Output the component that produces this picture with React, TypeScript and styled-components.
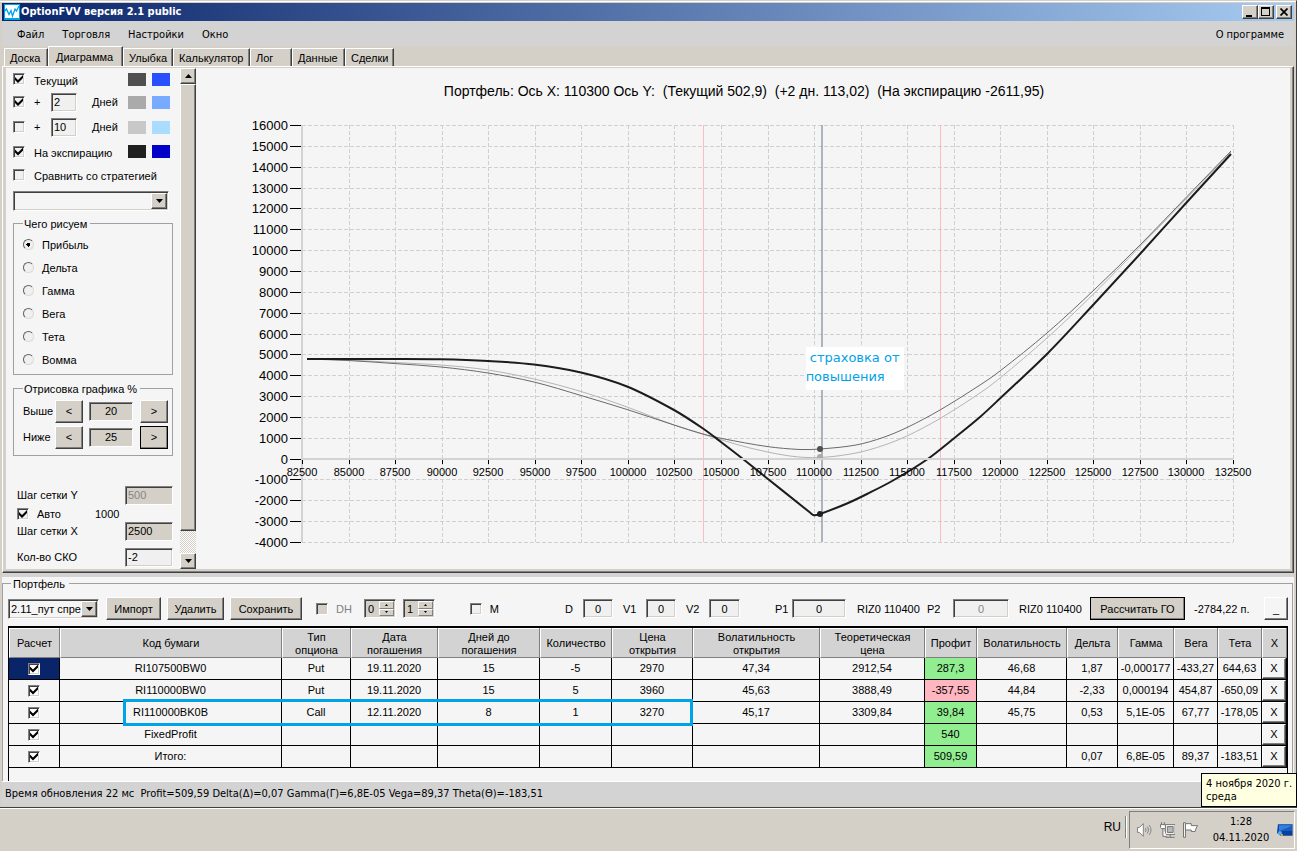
import React from 'react';
import styled, { createGlobalStyle, css } from 'styled-components';

const face = '#d4d0c8';
const panel = '#f5f5f5';
const bar = '#d3d3d3';
const controlFont = '"Liberation Sans", Arial, sans-serif';
const menuFont = '"DejaVu Sans Condensed", "DejaVu Sans", Tahoma, sans-serif';

const raised = css`
  border: 1px solid;
  border-color: #ffffff #404040 #404040 #ffffff;
  box-shadow: inset -1px -1px 0 #808080;
`;

const sunken = css`
  border: 1px solid;
  border-color: #808080 #ffffff #ffffff #808080;
  box-shadow: inset 1px 1px 0 #404040, inset -1px -1px 0 ${face};
`;

const GlobalStyle = createGlobalStyle`
  *, *::before, *::after { box-sizing: border-box; }
  body {
    margin: 0;
    background: ${face};
    color: #000000;
    font-family: ${controlFont};
    font-size: 11px;
    line-height: 14px;
  }
  button, input, select { font: inherit; color: inherit; margin: 0; border-radius: 0; }
`;

const Desktop = styled.div`
  display: flex;
  flex-direction: column;
  min-height: 100vh;
`;

const Window = styled.main`
  position: relative;
  flex: 1;
  display: flex;
  flex-direction: column;
  padding: 1px 2px 2px;
  border-top: 1px solid ${face};
  border-right: 1px solid #404040;
  border-bottom: 1px solid #404040;
  box-shadow: inset 0 1px 0 #ffffff;
`;

const TitleBar = styled.header`
  display: flex;
  align-items: center;
  height: 18px;
  margin-top: 1px;
  padding: 0 2px;
  background: linear-gradient(to right, #0a246a, #a6caf0);
  color: #ffffff;
`;

const Title = styled.h1`
  flex: 1;
  margin: 0 0 0 1px;
  font: bold 11px/16px ${menuFont};
`;

const CaptionButton = styled.button<{ $apart?: boolean }>`
  ${raised}
  display: flex;
  align-items: center;
  justify-content: center;
  width: 16px;
  height: 14px;
  padding: 0;
  margin-left: ${(p) => (p.$apart ? 2 : 0)}px;
  background: ${face};
  color: #000000;
`;

const MenuBar = styled.nav`
  display: flex;
  gap: 18px;
  align-items: center;
  height: 25px;
  padding: 2px 10px 0 15px;
  background: ${bar};
`;

const MenuItem = styled.button<{ $last?: boolean }>`
  padding: 0;
  border: 0;
  background: none;
  font-family: ${menuFont};
  margin-left: ${(p) => (p.$last ? 'auto' : 0)};
`;

const Tabs = styled.div`
  display: flex;
  align-items: flex-end;
  height: 20px;
  padding-left: 2px;
`;

const Tab = styled.button<{ $w: number; $active?: boolean }>`
  width: ${(p) => p.$w}px;
  height: ${(p) => (p.$active ? 20 : 18)}px;
  padding: 0 0 0 ${(p) => (p.$active ? 7 : 5)}px;
  border: 1px solid;
  border-color: #ffffff #404040 transparent #ffffff;
  border-bottom: 0;
  box-shadow: inset -1px 0 0 #808080;
  background: ${face};
  text-align: left;
  white-space: nowrap;
`;

const TabPage = styled.section`
  display: flex;
  border: 1px solid;
  border-color: #ffffff #404040 #404040 #ffffff;
  padding: 1px 3px 3px;
  box-shadow: inset -1px -1px 0 #808080, inset -3px -3px 0 ${face}, inset 1px 1px 0 ${face};
  background: linear-gradient(to right, ${face} 3px, ${panel} 3px);
`;

const Sidebar = styled.aside`
  flex: none;
  width: 174px;
  padding: 0 11px 0 7px;
`;

const SeriesRow = styled.div<{ $h: number }>`
  display: grid;
  grid-template-columns: 21px 17px 41px 36px 24px 18px;
  align-items: center;
  height: ${(p) => p.$h}px;
`;

const WideLabel = styled.label`
  grid-column: 2 / 5;
  padding-top: 3px;
  white-space: nowrap;
`;

const Swatch = styled.span<{ $color: string }>`
  width: 18px;
  height: 13px;
  background: ${(p) => p.$color};
`;

const Check = styled.input.attrs({ type: 'checkbox' })<{ $face?: boolean }>`
  ${sunken}
  appearance: none;
  position: relative;
  display: block;
  flex: none;
  width: 12px;
  height: 12px;
  background: ${(p) => (p.$face ? face : '#f0f0f0')};
  &:checked::after {
    content: '';
    position: absolute;
    left: 1px;
    top: 1px;
    width: 8px;
    height: 8px;
    background: #000000;
    clip-path: polygon(0 2px, 3px 5px, 8px 0, 8px 3px, 3px 8px, 0 5px);
  }
`;

const Radio = styled.input.attrs({ type: 'radio' })`
  appearance: none;
  width: 11px;
  height: 11px;
  border: 1px solid;
  border-color: #606060 #dddad4 #dddad4 #606060;
  border-radius: 50%;
  background: #f0f0f0;
  &:checked {
    background: radial-gradient(circle, #000000 0 2px, #f0f0f0 2px);
  }
`;

const TextBox = styled.input<{ $w: number; $tone?: string; $center?: boolean }>`
  ${sunken}
  width: ${(p) => p.$w}px;
  height: 19px;
  padding: 0 2px;
  background: ${(p) => p.$tone ?? '#f0f0f0'};
  text-align: ${(p) => (p.$center ? 'center' : 'left')};
  &:disabled { color: #868686; }
`;

const Combo = styled.div<{ $gapTop?: number }>`
  ${sunken}
  position: relative;
  display: flex;
  height: 20px;
  margin-top: ${(p) => p.$gapTop ?? 0}px;
  padding: 1px;
  background: ${panel};
`;

const Select = styled.select`
  appearance: none;
  flex: 1;
  min-width: 0;
  padding: 0 0 0 1px;
  border: 0;
  background: transparent;
`;

const ArrowBox = styled.span`
  ${raised}
  display: flex;
  align-items: center;
  justify-content: center;
  width: 16px;
  background: ${face};
  pointer-events: none;
`;

const Group = styled.fieldset<{ $gapTop: number; $padBottom: number }>`
  min-width: 0;
  margin: ${(p) => p.$gapTop}px 0 0;
  padding: 3px 4px ${(p) => p.$padBottom}px 9px;
  border: 1px solid #a0a0a0;
  width: 160px;
`;

const Legend = styled.legend`
  height: 14px;
  padding: 0 3px 0 1px;
  line-height: 16px;
`;

const RadioRow = styled.label`
  display: flex;
  align-items: center;
  gap: 8px;
  height: 23px;
`;

const RangeRow = styled.div`
  display: grid;
  grid-template-columns: 32px 34px 51px 28px;
  align-items: center;
  height: 26px;
`;

const PushButton = styled.button<{ $w?: number; $strong?: boolean; $tone?: string }>`
  ${raised}
  width: ${(p) => p.$w ?? 28}px;
  height: 23px;
  padding: 0;
  background: ${(p) => p.$tone ?? face};
  white-space: nowrap;
  outline: ${(p) => (p.$strong ? '1px solid #000000' : 'none')};
  outline-offset: -1px;
`;

const StepRow = styled.div<{ $h: number; $gapTop?: number }>`
  display: grid;
  grid-template-columns: 78px 30px 48px;
  align-items: center;
  height: ${(p) => p.$h}px;
  margin-top: ${(p) => p.$gapTop ?? 0}px;
  padding-left: 4px;
  white-space: nowrap;
`;

const AutoLabel = styled.label`
  display: flex;
  align-items: center;
  gap: 8px;
`;

const ScrollBar = styled.div`
  flex: none;
  display: flex;
  flex-direction: column;
  width: 16px;
  background: repeating-conic-gradient(#ffffff 0 25%, ${face} 0 50%) 0 0 / 2px 2px;
`;

const ScrollButton = styled.button`
  ${raised}
  display: flex;
  align-items: center;
  justify-content: center;
  height: 16px;
  padding: 0;
  background: ${face};
`;

const Thumb = styled.div`
  ${raised}
  flex: 1;
  margin-bottom: 22px;
  background: ${face};
`;

const ChartArea = styled.div`
  position: relative;
  flex: 1;
  min-width: 0;
`;

const ChartSvg = styled.svg`
  display: block;
  width: 100%;
  font-family: ${controlFont};
`;

const Note = styled.p`
  position: absolute;
  left: 56%;
  top: 56%;
  width: 98px;
  height: 43px;
  margin: -2px 0 0 -3px;
  padding: 1px 0;
  background: #ffffff;
  color: #00a2e8;
  font: 13px/19px "DejaVu Sans", Verdana, sans-serif;
  white-space: pre;
`;

const Portfolio = styled.section`
  flex: 1;
  display: flex;
  flex-direction: column;
  padding-top: 4px;
  background: linear-gradient(${bar} 4px, ${panel} 4px);
`;

const PortfolioGroup = styled.fieldset`
  flex: 1;
  min-width: 0;
  margin: 0 1px 0 0;
  padding: 0 4px 0 5px;
  border: 1px solid #a0a0a0;
  border-bottom: 0;
`;

const PortfolioLegend = styled.legend`
  height: 12px;
  margin-left: 3px;
  padding: 0 4px 0 2px;
  line-height: 14px;
`;

const Toolbar = styled.div`
  display: grid;
  grid-template-columns: 98px 61px 63px 86px 48px 39px 67px 95px 58px 63px 89px 82px 70px 92px 71px 104px 1fr 24px;
  align-items: center;
  height: 37px;
  padding-top: 2px;
  white-space: nowrap;
`;

const Cell = styled.div<{ $w?: number }>`
  width: ${(p) => (p.$w ? `${p.$w}px` : 'auto')};
`;

const ToolLabel = styled.label<{ $w: number; $dim?: boolean }>`
  display: flex;
  align-items: center;
  justify-content: space-between;
  width: ${(p) => p.$w}px;
  color: ${(p) => (p.$dim ? '#808080' : 'inherit')};
`;

const Spin = styled.div`
  ${sunken}
  display: flex;
  width: 32px;
  height: 19px;
  padding: 1px;
  background: ${face};
`;

const SpinInput = styled.input`
  flex: 1;
  min-width: 0;
  padding: 0 2px;
  border: 0;
  background: transparent;
`;

const SpinArrows = styled.div`
  display: flex;
  flex-direction: column;
  width: 15px;
`;

const SpinArrow = styled.button`
  flex: 1;
  display: flex;
  align-items: center;
  justify-content: center;
  padding: 0;
  background: ${face};
  border: 1px solid;
  border-color: #ffffff #808080 #808080 #ffffff;
`;

const TableBox = styled.div`
  position: relative;
  height: 155px;
  border: 1px solid #000000;
  border-top-width: 2px;
  border-bottom: 0;
`;

const Table = styled.table`
  width: 100%;
  table-layout: fixed;
  border-collapse: separate;
  border-spacing: 0;
  line-height: 13px;
  text-align: center;
`;

const HeadCell = styled.th`
  height: 30px;
  padding: 2px 0 0;
  border-left: 1px solid #ffffff;
  border-right: 1px solid #808080;
  border-bottom: 1px solid #808080;
  box-shadow: inset 0 1px 0 #ffffff;
  background: ${bar};
  font-weight: normal;
`;

const DataCell = styled.td<{ $tone?: string }>`
  height: 22px;
  padding: 0;
  border-right: 1px solid #000000;
  border-bottom: 1px solid #000000;
  background: ${(p) => p.$tone ?? panel};
  white-space: nowrap;
`;

const RowCheck = styled(Check)`
  margin: 0 auto;
  background: #ffffff;
`;

const DeleteButton = styled.button`
  ${raised}
  display: block;
  width: 100%;
  height: 21px;
  padding: 0;
  background: ${panel};
`;

const Highlight = styled.div`
  position: absolute;
  left: 114px;
  right: 594px;
  top: 71px;
  height: 27px;
  border: 3px solid #00a2e8;
`;

const StatusBar = styled.footer`
  height: 24px;
  padding: 5px 3px 0;
  border-top: 1px solid #ffffff;
  background: ${bar};
  font-family: ${menuFont};
  white-space: pre;
`;

const Tooltip = styled.div`
  position: absolute;
  right: -1px;
  bottom: 0;
  width: 96px;
  height: 34px;
  padding: 3px 4px;
  border: 1px solid #000000;
  background: #ffffe1;
  font: 11px/13px ${menuFont};
  white-space: nowrap;
`;

const Taskbar = styled.footer`
  display: flex;
  justify-content: flex-end;
  height: 43px;
  padding: 2px 2px 2px 0;
  border-top: 1px solid #ffffff;
  font-family: ${menuFont};
`;

const Language = styled.span`
  display: flex;
  align-items: center;
  height: 22px;
  margin: 5px 3px 0 0;
  padding-right: 4px;
  border-right: 1px solid #808080;
  box-shadow: 1px 0 0 #ffffff;
  font: 12px/14px ${controlFont};
`;

const Tray = styled.div`
  display: flex;
  align-items: center;
  gap: 8px;
  width: 166px;
  padding: 0 1px 0 6px;
  border: 1px solid;
  border-color: #808080 #ffffff #ffffff #808080;
`;

const Clock = styled.time`
  flex: 1;
  padding-left: 6px;
  font-size: 11px;
  line-height: 16px;
  text-align: center;
  white-space: nowrap;
`;

const Arrow = ({ up, small }: { up?: boolean; small?: boolean }) => (
  <svg width={small ? 3 : 7} height={small ? 2 : 4} viewBox="0 0 7 4" preserveAspectRatio="none" aria-hidden="true">
    <path d={up ? 'M0 4L3.5 0L7 4Z' : 'M0 0H7L3.5 4Z'} />
  </svg>
);

/* Chart geometry: plot rectangle and the level of zero profit. */
const plot = { left: 106, top: 57, right: 1037, bottom: 474, zero: 391 };
const xAt = (price: number) => plot.left + ((price - 82500) / 50000) * (plot.right - plot.left);
const yAt = (profit: number) => plot.top + ((16000 - profit) / 20000) * (plot.bottom - plot.top);
const xTicks = Array.from({ length: 21 }, (_, i) => 82500 + i * 2500);
const yTicks = Array.from({ length: 21 }, (_, i) => 16000 - i * 1000);

type Point = [number, number];

const expiry: Point[] = [
  [111, 291], [199, 291], [245, 291.3], [292, 293], [338, 296.5], [385, 304.5], [431, 318.5], [478, 342],
  [507, 360.5], [525, 374], [547, 391], [572, 411], [614, 444.5], [618, 447.3], [624, 446], [651, 435.5], [671, 426],
  [697, 412.5], [731, 391.5], [759, 369.5], [784, 349], [804, 330.5], [852, 285], [898, 236], [944, 186],
  [991, 134], [1035, 86],
];
const current: Point[] = [
  [111, 291], [152, 292.5], [198, 295.5], [245, 299], [292, 305], [338, 314], [385, 327.5], [431, 341.5], [478, 357],
  [507, 366], [526, 370.5], [571, 378.5], [604, 381.5], [624, 381], [660, 377], [687, 369.5], [711, 359.5], [744, 342],
  [784, 317], [804, 303], [851, 265], [898, 222], [944, 177], [991, 128.5], [1035, 83],
];
const plusTwo: Point[] = [
  [111, 291], [152, 292], [198, 294.5], [245, 297], [292, 302], [338, 311], [385, 323.5], [431, 339], [478, 357],
  [526, 372], [554, 380], [594, 388], [624, 389.5], [660, 385], [687, 377.5], [711, 368], [744, 350.5], [784, 325],
  [804, 310], [851, 270], [898, 225.5], [944, 178.5], [991, 130], [1035, 84],
];

/* Catmull-Rom spline through the points, written as cubic Béziers. */
const smooth = (pts: Point[]) =>
  pts.slice(1).reduce((d, p2, i) => {
    const p1 = pts[i];
    const p0 = pts[i - 1] ?? p1;
    const p3 = pts[i + 2] ?? p2;
    const h = p2[0] - p1[0];
    const s1 = (p2[1] - p0[1]) / (p2[0] - p0[0]);
    const s2 = (p3[1] - p1[1]) / (p3[0] - p1[0]);
    const c1 = [p1[0] + h / 3, p1[1] + (s1 * h) / 3];
    const c2 = [p2[0] - h / 3, p2[1] - (s2 * h) / 3];
    return `${d}C${c1} ${c2} ${p2}`;
  }, `M${pts[0]}`);

const Chart = () => (
  <ChartArea>
    <ChartSvg viewBox="0 0 1094 501" role="img" aria-label="Портфель">
      <text x="548" y="28" fontSize="14" textAnchor="middle" style={{ whiteSpace: 'pre' }}>
        {'Портфель: Ось X: 110300 Ось Y:  (Текущий 502,9)  (+2 дн. 113,02)  (На экспирацию -2611,95)'}
      </text>
      <g stroke="#d0d0d0" strokeDasharray="4 2" shapeRendering="crispEdges">
        {yTicks.map((v) => <path key={v} d={`M${plot.left} ${Math.round(yAt(v)) + 0.5}H${plot.right}`} />)}
        {xTicks.map((v) => <path key={v} d={`M${Math.round(xAt(v)) + 0.5} ${plot.top}V${plot.bottom}`} />)}
      </g>
      <path d={`M${plot.left} ${plot.top}V${plot.bottom}`} stroke="#d3d3d3" strokeWidth="2" />
      <g stroke="#000000" shapeRendering="crispEdges">
        {yTicks.map((v) => <path key={v} d={`M94 ${Math.round(yAt(v)) + 0.5}H105`} />)}
      </g>
      <g fontSize="13" textAnchor="end">
        {yTicks.map((v) => <text key={v} x="92" y={Math.round(yAt(v)) + 5}>{v}</text>)}
      </g>
      <path d="M507.5 57V474M744.5 57V474" stroke="#ffb9c4" />
      <path d="M626 57V474" stroke="#708090" strokeOpacity="0.55" strokeWidth="2" />
      <g fill="none">
        <path d={smooth(plusTwo)} stroke="#b4b4b4" />
        <path d={smooth(current)} stroke="#6a6a6a" />
        <path d={smooth(expiry)} stroke="#1c1c1c" strokeWidth="2" />
      </g>
      <circle cx="624" cy="389" r="3" fill="#aaaaaa" />
      <circle cx="624" cy="381" r="3" fill="#505050" />
      <circle cx="624" cy="446" r="3" fill="#202020" />
      <path d={`M${plot.left} ${plot.zero}H${plot.right}`} stroke="#d3d3d3" strokeWidth="2" />
      <g stroke="#000000" shapeRendering="crispEdges">
        {xTicks.map((v) => <path key={v} d={`M${Math.round(xAt(v)) + 0.5} 392V396`} />)}
      </g>
      <g fontSize="11" textAnchor="middle">
        {xTicks.map((v) => <text key={v} x={Math.round(xAt(v))} y="408">{v}</text>)}
      </g>
    </ChartSvg>
    <Note>{' страховка от\nповышения'}</Note>
  </ChartArea>
);

const tabs = [
  { name: 'Доска', w: 44 },
  { name: 'Диаграмма', w: 75, active: true },
  { name: 'Улыбка', w: 50 },
  { name: 'Калькулятор', w: 77 },
  { name: 'Лог', w: 42 },
  { name: 'Данные', w: 53 },
  { name: 'Сделки', w: 49 },
];

const metrics = ['Прибыль', 'Дельта', 'Гамма', 'Вега', 'Тета', 'Вомма'];

const columns: { title: string; w?: number }[] = [
  { title: 'Расчет', w: 51 },
  { title: 'Код бумаги' },
  { title: 'Тип\nопциона', w: 69 },
  { title: 'Дата\nпогашения', w: 87 },
  { title: 'Дней до\nпогашения', w: 102 },
  { title: 'Количество', w: 72 },
  { title: 'Цена\nоткрытия', w: 81 },
  { title: 'Волатильность\nоткрытия', w: 127 },
  { title: 'Теоретическая\nцена', w: 105 },
  { title: 'Профит', w: 52 },
  { title: 'Волатильность', w: 90 },
  { title: 'Дельта', w: 51 },
  { title: 'Гамма', w: 56 },
  { title: 'Вега', w: 44 },
  { title: 'Тета', w: 44 },
  { title: 'X', w: 25 },
];

const rows = [
  ['RI107500BW0', 'Put', '19.11.2020', '15', '-5', '2970', '47,34', '2912,54', '287,3', '46,68', '1,87', '-0,000177', '-433,27', '644,63'],
  ['RI110000BW0', 'Put', '19.11.2020', '15', '5', '3960', '45,63', '3888,49', '-357,55', '44,84', '-2,33', '0,000194', '454,87', '-650,09'],
  ['RI110000BK0B', 'Call', '12.11.2020', '8', '1', '3270', '45,17', '3309,84', '39,84', '45,75', '0,53', '5,1E-05', '67,77', '-178,05'],
  ['FixedProfit', '', '', '', '', '', '', '', '540', '', '', '', '', ''],
  ['Итого:', '', '', '', '', '', '', '', '509,59', '', '0,07', '6,8E-05', '89,37', '-183,51'],
];

const profitColumn = 8;

const App = () => (
  <Desktop>
    <GlobalStyle />
    <Window>
      <TitleBar>
        <svg width="16" height="16" viewBox="0 0 16 16" aria-hidden="true">
          <rect width="16" height="16" fill="#00a2e8" />
          <rect x="1" y="1" width="14" height="13" fill="#ffffff" />
          <path d="M1 7L2.5 5L5 10.5L7 6.5L8.5 12L11 5L12.5 7L15 2" fill="none" stroke="#00a2e8" strokeWidth="1.3" />
        </svg>
        <Title>OptionFVV версия 2.1 public</Title>
        <CaptionButton aria-label="Свернуть">
          <svg width="10" height="9"><path d="M1 7H7V9H1Z" /></svg>
        </CaptionButton>
        <CaptionButton aria-label="Развернуть">
          <svg width="10" height="10"><path d="M0 0H9V9H0ZM1 2V8H8V2Z" fillRule="evenodd" /></svg>
        </CaptionButton>
        <CaptionButton $apart aria-label="Закрыть">
          <svg width="8" height="8"><path d="M0.5 0.5L7.5 7.5M7.5 0.5L0.5 7.5" stroke="#000000" strokeWidth="1.7" /></svg>
        </CaptionButton>
      </TitleBar>

      <MenuBar>
        <MenuItem>Файл</MenuItem>
        <MenuItem>Торговля</MenuItem>
        <MenuItem>Настройки</MenuItem>
        <MenuItem>Окно</MenuItem>
        <MenuItem $last>О программе</MenuItem>
      </MenuBar>

      <Tabs role="tablist">
        {tabs.map((t) => (
          <Tab key={t.name} role="tab" aria-selected={!!t.active} $w={t.w} $active={t.active}>{t.name}</Tab>
        ))}
      </Tabs>

      <TabPage>
        <Sidebar>
          <SeriesRow $h={22}>
            <Check id="now" defaultChecked />
            <WideLabel htmlFor="now">Текущий</WideLabel>
            <Swatch $color="#505050" />
            <Swatch $color="#2850ff" />
          </SeriesRow>
          <SeriesRow $h={24}>
            <Check id="plus-a" defaultChecked />
            <label htmlFor="plus-a">+</label>
            <TextBox $w={26} defaultValue="2" aria-label="Дней" />
            <span>Дней</span>
            <Swatch $color="#aaaaaa" />
            <Swatch $color="#78aaff" />
          </SeriesRow>
          <SeriesRow $h={26}>
            <Check id="plus-b" />
            <label htmlFor="plus-b">+</label>
            <TextBox $w={26} defaultValue="10" aria-label="Дней" />
            <span>Дней</span>
            <Swatch $color="#c8c8c8" />
            <Swatch $color="#aadcff" />
          </SeriesRow>
          <SeriesRow $h={23}>
            <Check id="at-expiry" defaultChecked />
            <WideLabel htmlFor="at-expiry">На экспирацию</WideLabel>
            <Swatch $color="#202020" />
            <Swatch $color="#0000c8" />
          </SeriesRow>
          <SeriesRow $h={23}>
            <Check id="compare" />
            <WideLabel htmlFor="compare">Сравнить со стратегией</WideLabel>
          </SeriesRow>
          <Combo $gapTop={5}>
            <Select aria-label="Стратегия" />
            <ArrowBox><Arrow /></ArrowBox>
          </Combo>

          <Group $gapTop={5} $padBottom={3}>
            <Legend>Чего рисуем</Legend>
            {metrics.map((m, i) => (
              <RadioRow key={m}>
                <Radio name="metric" defaultChecked={i === 0} />
                {m}
              </RadioRow>
            ))}
          </Group>

          <Group $gapTop={6} $padBottom={5}>
            <Legend>Отрисовка графика %</Legend>
            <RangeRow>
              <label htmlFor="above">Выше</label>
              <PushButton>&lt;</PushButton>
              <TextBox id="above" $w={44} $tone={face} $center defaultValue="20" />
              <PushButton>&gt;</PushButton>
            </RangeRow>
            <RangeRow>
              <label htmlFor="below">Ниже</label>
              <PushButton>&lt;</PushButton>
              <TextBox id="below" $w={44} $tone={face} $center defaultValue="25" />
              <PushButton $strong>&gt;</PushButton>
            </RangeRow>
          </Group>

          <StepRow $h={24} $gapTop={27}>
            <label htmlFor="step-y">Шаг сетки Y</label>
            <span />
            <TextBox id="step-y" $w={48} $tone={face} defaultValue="500" disabled />
          </StepRow>
          <StepRow $h={12}>
            <AutoLabel><Check defaultChecked />Авто</AutoLabel>
            <span>1000</span>
          </StepRow>
          <StepRow $h={24}>
            <label htmlFor="step-x">Шаг сетки X</label>
            <span />
            <TextBox id="step-x" $w={48} $tone={face} defaultValue="2500" />
          </StepRow>
          <StepRow $h={24} $gapTop={2}>
            <label htmlFor="sigma">Кол-во СКО</label>
            <span />
            <TextBox id="sigma" $w={48} defaultValue="-2" />
          </StepRow>
        </Sidebar>
        <ScrollBar>
          <ScrollButton aria-label="Вверх"><Arrow up /></ScrollButton>
          <Thumb />
          <ScrollButton aria-label="Вниз"><Arrow /></ScrollButton>
        </ScrollBar>
        <Chart />
      </TabPage>

      <Portfolio>
        <PortfolioGroup>
          <PortfolioLegend>Портфель</PortfolioLegend>
          <Toolbar>
            <Cell $w={91}>
              <Combo>
                <Select aria-label="Портфель"><option>2.11_пут спре</option></Select>
                <ArrowBox><Arrow /></ArrowBox>
              </Combo>
            </Cell>
            <PushButton $w={55}>Импорт</PushButton>
            <PushButton $w={57}>Удалить</PushButton>
            <PushButton $w={72}>Сохранить</PushButton>
            <ToolLabel $w={36} $dim><Check $face disabled />DH</ToolLabel>
            {['0', '1'].map((v) => (
              <Spin key={v}>
                <SpinInput defaultValue={v} aria-label={`DH ${v}`} />
                <SpinArrows>
                  <SpinArrow aria-label="Больше"><Arrow up small /></SpinArrow>
                  <SpinArrow aria-label="Меньше"><Arrow small /></SpinArrow>
                </SpinArrows>
              </Spin>
            ))}
            <ToolLabel $w={29}><Check />M</ToolLabel>
            <ToolLabel $w={48}>D<TextBox $w={30} $center defaultValue="0" /></ToolLabel>
            <ToolLabel $w={53}>V1<TextBox $w={30} $center defaultValue="0" /></ToolLabel>
            <ToolLabel $w={54}>V2<TextBox $w={31} $center defaultValue="0" /></ToolLabel>
            <ToolLabel $w={71}>P1<TextBox $w={54} $center defaultValue="0" /></ToolLabel>
            <span>RIZ0 110400</span>
            <ToolLabel $w={82}>P2<TextBox $w={56} $center defaultValue="0" disabled /></ToolLabel>
            <span>RIZ0 110400</span>
            <PushButton $w={95} $strong>Рассчитать ГО</PushButton>
            <span>-2784,22 п.</span>
            <PushButton $w={24} $tone={panel}>_</PushButton>
          </Toolbar>

          <TableBox>
            <Table>
              <colgroup>
                {columns.map((c, i) => <col key={i} width={c.w} />)}
              </colgroup>
              <thead>
                <tr>
                  {columns.map((c, i) => (
                    <HeadCell key={i} scope="col">
                      {c.title.split('\n').map((line) => <div key={line}>{line}</div>)}
                    </HeadCell>
                  ))}
                </tr>
              </thead>
              <tbody>
                {rows.map((r, i) => (
                  <tr key={r[0]}>
                    <DataCell $tone={i === 0 ? '#0a246a' : undefined}>
                      <RowCheck defaultChecked aria-label={r[0]} />
                    </DataCell>
                    {r.map((v, j) => (
                      <DataCell
                        key={j}
                        $tone={j === profitColumn ? (v.startsWith('-') ? '#ffb6c1' : '#90ee90') : undefined}
                      >
                        {v}
                      </DataCell>
                    ))}
                    <DataCell><DeleteButton>X</DeleteButton></DataCell>
                  </tr>
                ))}
              </tbody>
            </Table>
            <Highlight />
          </TableBox>
        </PortfolioGroup>
      </Portfolio>

      <StatusBar>
        {'Время обновления 22 мс  Profit=509,59 Delta(Δ)=0,07 Gamma(Γ)=6,8E-05 Vega=89,37 Theta(Θ)=-183,51'}
      </StatusBar>
      <Tooltip role="tooltip">4 ноября 2020 г.<br />среда</Tooltip>
    </Window>

    <Taskbar>
      <Language>RU</Language>
      <Tray>
        <svg width="16" height="16" viewBox="0 0 16 16" fill="none" stroke="#808080" aria-hidden="true">
          <path d="M1.5 5.5H3.5L7.5 1.5V14.5L3.5 10.5H1.5Z" fill="#ffffff" />
          <path d="M9.5 6C10.5 7 10.5 9 9.5 10M11.5 4.5C13.2 6.5 13.2 9.5 11.5 11.5M13.5 3C16 6 16 10 13.5 13" />
        </svg>
        <svg width="16" height="16" viewBox="0 0 16 16" fill="none" stroke="#707070" aria-hidden="true">
          <path d="M5.5 2.5H15.5V12.5H5.5Z" fill="#ffffff" />
          <path d="M7.5 4.5H13.5V10.5H7.5Z" fill="#b8b8b8" />
          <path d="M6 15.5H15M10.5 13V15" />
          <path d="M0.5 2.5H5.5V5.5L4.5 6.5H1.5L0.5 5.5ZM1.5 0V2M4.5 0V2M3 7V14.5H7" fill="#ffffff" />
        </svg>
        <svg width="16" height="16" viewBox="0 0 16 16" fill="#ffffff" stroke="#707070" aria-hidden="true">
          <path d="M0.5 0.5H2.5V15.5H0.5Z" />
          <path d="M2.5 1.5H8.5V3.5H15L13.5 6L12.5 9.5H8.5V8H2.5Z" />
        </svg>
        <Clock>1:28<br />04.11.2020</Clock>
        <svg width="16" height="14" viewBox="0 0 16 14" aria-hidden="true">
          <path d="M1 1H16V13H4L0 10Z" fill="#0b3f9c" />
          <path d="M2 2H15V8H2Z" fill="#2f83e0" />
          <path d="M2 8L15 3V8Z" fill="#1a5cc0" />
          <circle cx="3" cy="10" r="2" fill="#49b3ff" />
          <path d="M4 11H6V13H4Z" fill="#f2a33a" />
        </svg>
      </Tray>
    </Taskbar>
  </Desktop>
);

export default App;
